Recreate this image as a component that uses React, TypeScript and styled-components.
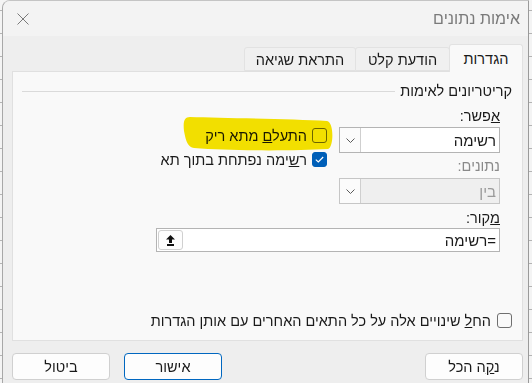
import styled, { createGlobalStyle } from 'styled-components';

const GlobalStyle = createGlobalStyle`
    html, body {
        margin: 0;
        padding: 0;
        width: 532px;
        height: 383px;
        overflow: hidden;
    }
    body {
        background-color: #f4f4f4;
        background-image: repeating-linear-gradient(to bottom, transparent 0 10px, #b4b4b4 10px 11px, transparent 11px 23px);
        font-family: "Liberation Sans", "DejaVu Sans", sans-serif;
        font-size: 14.5px;
        color: #1a1a1a;
    }
`;

const Window = styled.div`
    margin-left: 2px;
    width: 525px;
    height: 390px;
    background: #eeeeee;
    border-left: 1px solid #a8a8a8;
    border-top: 1px solid #c4c4c4;
    border-right: 1px solid #9a9a9a;
    border-top-left-radius: 8px;
    overflow: hidden;
    direction: rtl;
`;

const TitleBar = styled.div`
    height: 35px;
    display: flex;
    align-items: center;
    justify-content: space-between;
    padding: 0 8px 0 14px;
    background: #f3f3f3;
`;

const Title = styled.div`
    color: #7a7a7a;
    font-size: 16px;
    margin-top: 1px;
`;

const CloseButton = styled.div`
    width: 12px;
    height: 12px;
    display: flex;
`;

const Body = styled.div`
    padding: 8px 5px 0 9px;
`;

const TabRow = styled.div`
    display: flex;
    align-items: flex-end;
    height: 27px;
`;

const Tab = styled.div<{ $active?: boolean; $w: number }>`
    position: relative;
    z-index: ${p => (p.$active ? 1 : 0)};
    width: ${p => p.$w}px;
    height: ${p => (p.$active ? 28 : 24)}px;
    margin-bottom: ${p => (p.$active ? -1 : 0)}px;
    box-sizing: border-box;
    display: flex;
    align-items: center;
    justify-content: center;
    padding-top: ${p => (p.$active ? 0 : 1)}px;
    background: ${p => (p.$active ? '#f9f9f9' : '#f0f0f0')};
    border: 1px solid #e2e2e2;
    border-bottom: ${p => (p.$active ? 'none' : '1px solid #e2e2e2')};
    margin-left: -1px;
    border-radius: 3px 3px 0 0;
    color: #1a1a1a;
`;

const Panel = styled.div`
    height: 270px;
    box-sizing: border-box;
    background: #f9f9f9;
    border: 1px solid #e0e0e0;
    display: flex;
    flex-direction: column;
    padding: 11px 10px 12px 9px;
`;

const GroupHeader = styled.div`
    display: flex;
    align-items: center;
    gap: 5px;
    height: 16px;
    line-height: 16px;
`;

const GroupLine = styled.div`
    flex: 1;
    border-top: 1px solid #dadada;
    margin-top: 1px;
`;

const Form = styled.div`
    position: relative;
    display: grid;
    grid-template-columns: 161px auto;
    column-gap: 12px;
    justify-content: start;
    padding-right: 12px;
`;

const FieldLabel = styled.div<{ $top: number; $disabled?: boolean }>`
    grid-column: 1;
    height: 16px;
    line-height: 16px;
    margin-top: ${p => p.$top}px;
    color: ${p => (p.$disabled ? '#8a8a8a' : '#1a1a1a')};
`;

const Combo = styled.div<{ $top: number; $disabled?: boolean }>`
    grid-column: 1;
    margin-top: ${p => p.$top}px;
    height: 26px;
    box-sizing: border-box;
    display: flex;
    align-items: stretch;
    border: 1px solid ${p => (p.$disabled ? '#c6c6c6' : '#b4b4b4')};
    background: ${p => (p.$disabled ? '#efefef' : '#ffffff')};
    color: ${p => (p.$disabled ? '#9a9a9a' : '#1a1a1a')};
`;

const ComboText = styled.div`
    flex: 1;
    display: flex;
    align-items: center;
    padding-right: 3px;
    font-size: 15px;
`;

const ComboArrow = styled.div`
    width: 20px;
    display: flex;
    align-items: center;
    justify-content: center;
    border-right: 1px solid #cfcfcf;
    background: #fbfbfb;
`;

const CheckColumn = styled.div`
    grid-column: 2;
    grid-row: 2 / span 3;
    margin-top: 4px;
    display: flex;
    flex-direction: column;
    align-items: flex-start;
    gap: 9px;
`;

const CheckItem = styled.label`
    display: flex;
    align-items: center;
    gap: 5px;
    height: 15px;
    white-space: nowrap;
`;

const Box = styled.span<{ $checked?: boolean }>`
    width: 15px;
    height: 15px;
    box-sizing: border-box;
    border-radius: 3px;
    border: 1px solid ${p => (p.$checked ? '#005fb8' : '#6f6f6f')};
    background: ${p => (p.$checked ? '#005fb8' : 'transparent')};
    display: flex;
    align-items: center;
    justify-content: center;
    flex-shrink: 0;
`;

const Highlight = styled.svg`
    position: absolute;
    left: 160px;
    top: 18px;
    mix-blend-mode: multiply;
    pointer-events: none;
`;

const SourceInput = styled.div`
    grid-column: 1 / span 2;
    width: 344px;
    margin-top: 2px;
    height: 24px;
    box-sizing: border-box;
    border: 1px solid #b4b4b4;
    background: #ffffff;
    display: flex;
    align-items: center;
    justify-content: space-between;
    padding: 0 3px 0 1px;
    font-size: 15px;
`;

const RefButton = styled.div`
    width: 25px;
    height: 20px;
    box-sizing: border-box;
    border: 1px solid #d0d0d0;
    border-radius: 3px;
    background: #fdfdfd;
    display: flex;
    align-items: center;
    justify-content: center;
`;

const ApplyRow = styled(CheckItem)`
    margin-top: auto;
    gap: 6px;
`;

const ButtonRow = styled.div`
    display: flex;
    justify-content: space-between;
    margin-top: 12px;
`;

const ButtonGroup = styled.div`
    display: flex;
    gap: 14px;
`;

const Button = styled.button<{ $primary?: boolean }>`
    width: 98px;
    height: 27px;
    box-sizing: border-box;
    font-family: inherit;
    font-size: 14.5px;
    color: #1a1a1a;
    background: #fdfdfd;
    border: 1px solid ${p => (p.$primary ? '#0067c0' : '#d0d0d0')};
    border-radius: 4px;
    padding: 0;
`;

const Chevron = () => (
    <svg width="9" height="5" viewBox="0 0 9 5">
        <path d="M0.5 0.5 L4.5 4.5 L8.5 0.5" fill="none" stroke="#5a5a5a" strokeWidth="1" />
    </svg>
);

const CheckMark = () => (
    <svg width="9" height="7" viewBox="0 0 9 7">
        <path d="M0.8 3.6 L3.3 6 L8.2 1" fill="none" stroke="#ffffff" strokeWidth="1.2" />
    </svg>
);

export default function App() {
    return (
        <>
            <GlobalStyle />
            <Window>
                <TitleBar>
                    <Title>אימות נתונים</Title>
                    <CloseButton>
                        <svg width="12" height="12" viewBox="0 0 12 12">
                            <path d="M0.5 0.5 L11.5 11.5 M11.5 0.5 L0.5 11.5" stroke="#7a7a7a" strokeWidth="1" />
                        </svg>
                    </CloseButton>
                </TitleBar>
                <Body>
                    <TabRow>
                        <Tab $active $w={74}>הגדרות</Tab>
                        <Tab $w={95}>הודעת קלט</Tab>
                        <Tab $w={112}>התראת שגיאה</Tab>
                    </TabRow>
                    <Panel>
                        <GroupHeader>
                            קריטריונים לאימות
                            <GroupLine />
                        </GroupHeader>
                        <Form>
                            <Highlight width="152" height="36" viewBox="0 0 152 36">
                                <path
                                    d="M8 0 C40 1 110 2 145 4 C152 5 152 30 146 32 C110 34 50 34 12 31 C6 30 4 25 2 14 C1 5 2 0 8 0 Z"
                                    fill="#f8e500"
                                />
                            </Highlight>
                            <FieldLabel $top={9}><u>א</u>פשר:</FieldLabel>
                            <Combo $top={3}>
                                <ComboText>רשימה</ComboText>
                                <ComboArrow><Chevron /></ComboArrow>
                            </Combo>
                            <CheckColumn>
                                <CheckItem>
                                    <Box />
                                    <span>התעל<u>ם</u> מתא ריק</span>
                                </CheckItem>
                                <CheckItem>
                                    <Box $checked><CheckMark /></Box>
                                    <span>ר<u>ש</u>ימה נפתחת בתוך תא</span>
                                </CheckItem>
                            </CheckColumn>
                            <FieldLabel $top={5} $disabled>נתונים:</FieldLabel>
                            <Combo $top={4} $disabled>
                                <ComboText>בין</ComboText>
                                <ComboArrow><Chevron /></ComboArrow>
                            </Combo>
                            <FieldLabel $top={6}><u>מ</u>קור:</FieldLabel>
                            <SourceInput>
                                <span>=רשימה</span>
                                <RefButton>
                                    <svg width="9" height="11" viewBox="0 0 9 11">
                                        <path d="M4.5 0 L9 4.5 L6 4.5 L6 8 L3 8 L3 4.5 L0 4.5 Z" fill="#111" />
                                        <rect x="1" y="9" width="7" height="2" fill="#111" />
                                    </svg>
                                </RefButton>
                            </SourceInput>
                        </Form>
                        <ApplyRow>
                            <Box />
                            <span>הח<u>ל</u> שינויים אלה על כל התאים האחרים עם אותן הגדרות</span>
                        </ApplyRow>
                    </Panel>
                    <ButtonRow>
                        <Button>נ<u>ק</u>ה הכל</Button>
                        <ButtonGroup>
                            <Button $primary>אישור</Button>
                            <Button>ביטול</Button>
                        </ButtonGroup>
                    </ButtonRow>
                </Body>
            </Window>
        </>
    );
}
